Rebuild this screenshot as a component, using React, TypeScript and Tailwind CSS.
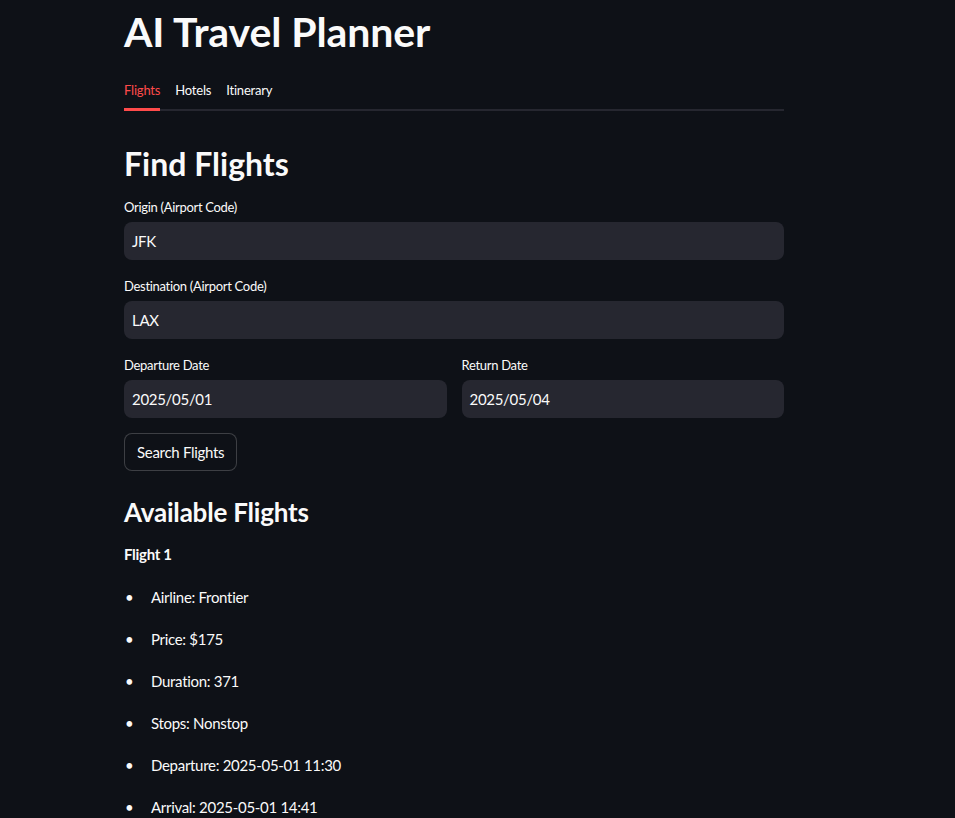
import React from "react";

const items = [
  "Airline: Frontier",
  "Price: $175",
  "Duration: 371",
  "Stops: Nonstop",
  "Departure: 2025-05-01 11:30",
  "Arrival: 2025-05-01 14:41",
];

function Field({ label, value }: { label: string; value: string }) {
  return (
    <div className="flex flex-col">
      <label className="text-[13px] leading-[20px] tracking-[-0.3px] text-[#fafafa] mb-[5px]">{label}</label>
      <div className="h-[38px] rounded-[8px] bg-[#262730] flex items-center px-[8px] text-[15px] tracking-[-0.3px] text-[#fafafa]">
        {value}
      </div>
    </div>
  );
}

export default function App() {
  return (
    <div
      className="min-h-[818px] bg-[#0e1117] text-[#fafafa]"
      style={{ fontFamily: "Lato, 'Noto Sans', sans-serif" }}
    >
      <div className="w-[660px] ml-[124px] pt-[6px]">
        <h1 className="text-[41px] font-bold leading-[52px] tracking-[-0.1px]">AI Travel Planner</h1>
        <div className="mt-[22px] flex gap-[15px] border-b-2 border-[#262730] text-[13px] tracking-[-0.2px]">
          <div className="pb-[8px] text-[#ff4b4b] border-b-[3px] border-[#ff4b4b] -mb-[2px] leading-[20px]">Flights</div>
          <div className="pb-[8px] leading-[20px]">Hotels</div>
          <div className="pb-[8px] leading-[20px]">Itinerary</div>
        </div>
        <h2 className="mt-[33px] text-[32px] font-bold leading-[40px]">Find Flights</h2>
        <div className="mt-[13px] flex flex-col gap-[16px]">
          <Field label="Origin (Airport Code)" value="JFK" />
          <Field label="Destination (Airport Code)" value="LAX" />
          <div className="grid grid-cols-2 gap-[15px]">
            <Field label="Departure Date" value="2025/05/01" />
            <Field label="Return Date" value="2025/05/04" />
          </div>
        </div>
        <button className="mt-[15px] h-[38px] px-[12px] rounded-[8px] border border-[rgba(250,250,250,0.2)] text-[15px] tracking-[-0.3px] bg-[#0e1117]">
          Search Flights
        </button>
        <h3 className="mt-[23px] text-[26px] font-bold leading-[36px] tracking-[-0.2px]">Available Flights</h3>
        <p className="mt-[12px] text-[15px] font-bold leading-[24px] tracking-[-0.3px]">Flight 1</p>
        <ul className="mt-[19px] flex flex-col gap-[18px] text-[15px] tracking-[-0.3px]">
          {items.map((t) => (
            <li key={t} className="flex items-center leading-[24px]">
              <span className="w-[27px] pl-[1px] text-[#fafafa]">•</span>
              <span>{t}</span>
            </li>
          ))}
        </ul>
      </div>
    </div>
  );
}
